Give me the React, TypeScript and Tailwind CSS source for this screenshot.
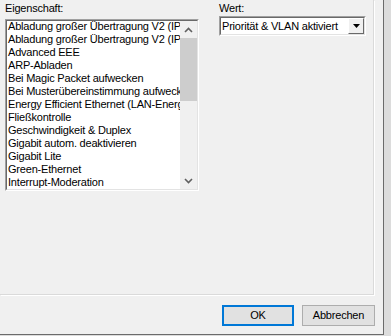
import React from "react";

const PROPERTIES = [
  "Abladung großer Übertragung V2 (IP",
  "Abladung großer Übertragung V2 (IP",
  "Advanced EEE",
  "ARP-Abladen",
  "Bei Magic Packet aufwecken",
  "Bei Musterübereinstimmung aufweck",
  "Energy Efficient Ethernet (LAN-Energ",
  "Fließkontrolle",
  "Geschwindigkeit & Duplex",
  "Gigabit autom. deaktivieren",
  "Gigabit Lite",
  "Green-Ethernet",
  "Interrupt-Moderation",
];

function Chevron({ up }: { up?: boolean }) {
  return (
    <svg width="9" height="6" viewBox="0 0 9 6">
      <path
        d={up ? "M1 5 L4.5 1.5 L8 5" : "M1 1 L4.5 4.5 L8 1"}
        fill="none"
        stroke="#606060"
        strokeWidth="1.6"
      />
    </svg>
  );
}

export default function App() {
  return (
    <div
      className="w-[391px] h-[336px] bg-[#dcdcdc] overflow-hidden text-[11px] leading-[13px] tracking-[-0.2px] text-black"
      style={{ fontFamily: '"Liberation Sans", Arial, sans-serif' }}
    >
      <div className="w-[384px] h-[335px] bg-[#f0f0f0] border-r border-b border-[#6b6b6b] flex flex-col">
        {/* tab page */}
        <div className="w-[374px] h-[295px] border-r border-b border-[#dadada] shadow-[1px_1px_0_#ffffff] pt-[2px] pl-[5px] flex">
          <div className="flex flex-col w-[194px]">
            <div className="h-[13px]">Eigenschaft:</div>
            <div className="mt-[4px] h-[172px] border border-t-[#a0a0a0] border-l-[#a0a0a0] border-r-white border-b-white">
              <div className="h-full border border-t-[#696969] border-l-[#696969] border-r-[#e3e3e3] border-b-[#e3e3e3] bg-white flex overflow-hidden">
                <div className="flex-1 min-w-0 overflow-hidden">
                  <div className="-mt-[1px] pl-[1px]">
                    {PROPERTIES.map((p, i) => (
                      <div key={i} className="h-[13px] whitespace-nowrap">
                        {p}
                      </div>
                    ))}
                  </div>
                </div>
                <div className="w-[17px] bg-[#f0f0f0] flex flex-col">
                  <div className="h-[17px] flex items-center justify-center">
                    <Chevron up />
                  </div>
                  <div className="h-[63px] bg-[#cdcdcd]" />
                  <div className="flex-1" />
                  <div className="h-[17px] flex items-center justify-center">
                    <Chevron />
                  </div>
                </div>
              </div>
            </div>
          </div>

          <div className="flex flex-col ml-[20px]">
            <div className="h-[13px]">Wert:</div>
            <div className="mt-[1px] w-[147px] h-[20px] border border-t-[#a0a0a0] border-l-[#a0a0a0] border-r-white border-b-white">
              <div className="h-full border border-t-[#696969] border-l-[#696969] border-r-[#e3e3e3] border-b-[#e3e3e3] bg-white flex items-center">
                <div className="flex-1 pl-[1px] whitespace-nowrap overflow-hidden">
                  Priorität &amp; VLAN aktiviert
                </div>
                <div className="w-[16px] h-full bg-[#f0f0f0] border border-t-white border-l-white border-r-[#696969] border-b-[#696969] flex items-center justify-center">
                  <svg width="7" height="4" viewBox="0 0 7 4">
                    <path d="M0 0 H7 L3.5 4 Z" fill="#000" />
                  </svg>
                </div>
              </div>
            </div>
          </div>
        </div>

        {/* buttons */}
        <div className="mt-[10px] flex justify-end gap-[8px] pr-[8px]">
          <button className="w-[72px] h-[21px] bg-[#e1e1e1] border-2 border-[#0078d7] flex items-center justify-center">
            OK
          </button>
          <button className="w-[73px] h-[21px] bg-[#e1e1e1] border border-[#adadad] flex items-center justify-center">
            Abbrechen
          </button>
        </div>
      </div>
    </div>
  );
}
